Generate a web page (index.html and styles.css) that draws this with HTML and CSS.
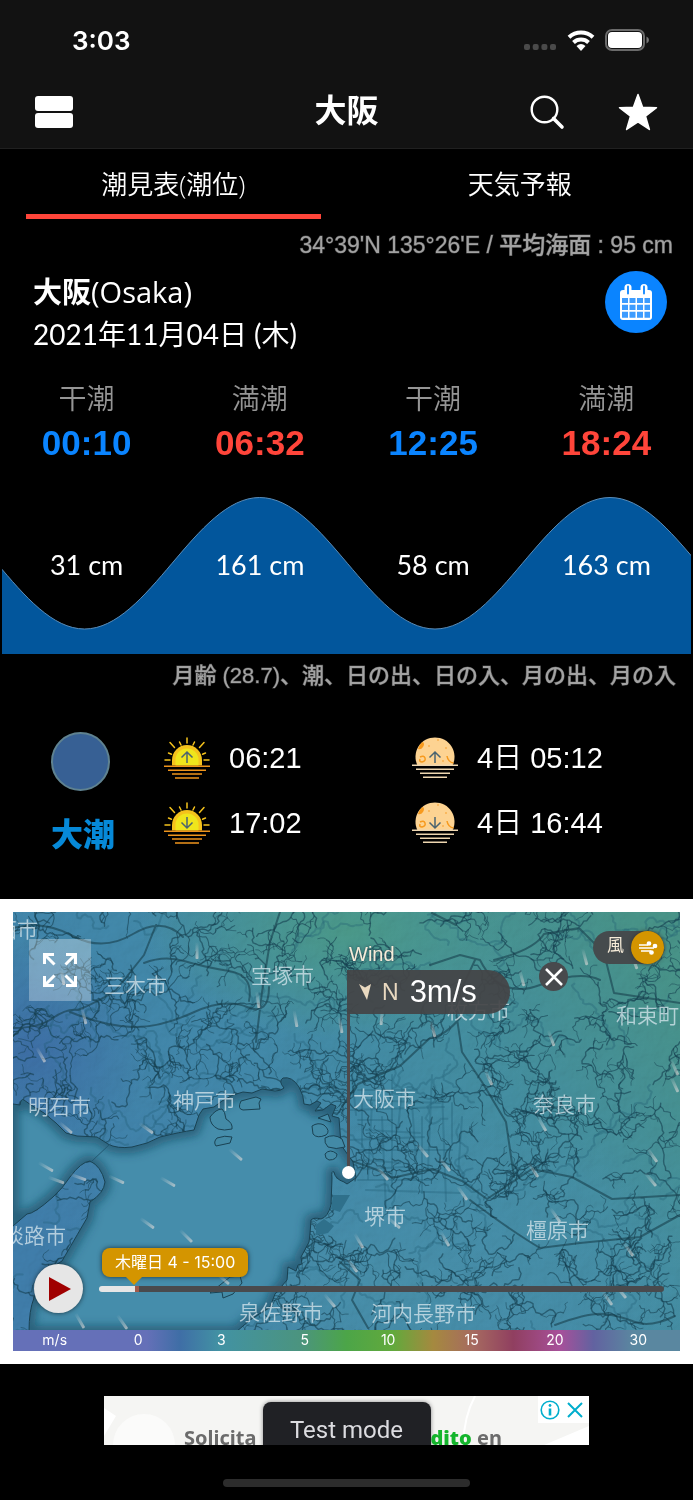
FILE: index.html
```
<!DOCTYPE html>
<html lang="ja">
<head>
<meta charset="utf-8">
<meta name="viewport" content="width=device-width, initial-scale=1">
<title>大阪 潮見表</title>
<link rel="stylesheet" href="styles.css">
</head>
<body>
<header class="top">
  <div class="status">
    <span class="clock">3:03</span>
    <div class="status-icons">
      <svg width="32" height="8" viewBox="0 0 32 8" fill="#4a4a4a"><rect x="0" y="1" width="6" height="6" rx="2"/><rect x="8.700" y="1" width="6" height="6" rx="2"/><rect x="17.400" y="1" width="6" height="6" rx="2"/><rect x="26" y="1" width="6" height="6" rx="2"/></svg>
      <svg class="wifi" width="28" height="22" viewBox="0 0 28 22" fill="none" stroke="#fff" stroke-width="4"><path d="M2 8.200A17.500 17.500 0 0 1 26 8.200"/><path d="M6.500 13.500A11 11 0 0 1 21.500 13.500"/><path d="M14 22l-4.500-5q4.500-4 9 0z" fill="#fff" stroke="none"/></svg>
      <svg width="44" height="22" viewBox="0 0 44 22"><rect x="1" y="1" width="38" height="20" rx="6" fill="none" stroke="#6b6b6b" stroke-width="2"/><rect x="3" y="3" width="34" height="16" rx="4" fill="#fff"/><path d="M41.500 7.500q2.500 1 2.500 3.500t-2.500 3.500z" fill="#777"/></svg>
    </div>
  </div>
  <div class="nav">
    <button class="icon-btn" aria-label="メニュー"><svg width="38" height="32" viewBox="0 0 38 32" fill="#fff"><rect y="0" width="38" height="15" rx="3"/><rect y="17" width="38" height="15" rx="3"/></svg></button>
    <h1 class="title">大阪</h1>
    <div class="nav-right">
      <button class="icon-btn" aria-label="検索"><svg width="36" height="36" viewBox="0 0 36 36" fill="none" stroke="#fff"><circle cx="15.500" cy="15.500" r="12.800" stroke-width="2.400"/><path d="M24.500 24.500l8.500 8.500" stroke-width="3.600" stroke-linecap="round"/></svg></button>
      <button class="icon-btn" aria-label="お気に入り"><svg width="40" height="38" viewBox="0 0 40 38" fill="#fff" stroke="#fff" stroke-width="1.500" stroke-linejoin="round"><path d="M20 1.500l4.600 12.800 13.900.400-11 8.500 3.900 13.300L20 28.800 8.600 36.500l3.900-13.300-11-8.500 13.900-.400z"/></svg></button>
    </div>
  </div>
</header>

<nav class="tabs">
  <button class="tab tab-active">潮見表(潮位)</button>
  <button class="tab">天気予報</button>
</nav>

<main>
  <section class="place">
    <p class="note">34°39'N 135°26'E / 平均海面 : 95 cm</p>
    <div class="place-row">
      <div>
        <h2 class="place-name"><b>大阪</b>(Osaka)</h2>
        <p class="place-date">2021年11月04日 (木)</p>
      </div>
      <button class="cal-btn" aria-label="カレンダー">
        <svg width="36" height="38" viewBox="0 0 36 38" fill="#fff"><rect x="2" y="7" width="32" height="30" rx="3"/><rect x="6.500" y="1" width="7" height="12" rx="3.500"/><rect x="22.500" y="1" width="7" height="12" rx="3.500"/><path d="M10 3.500v7M26 3.500v7" stroke="#0a84ff" stroke-width="1.800" stroke-linecap="round"/><g fill="#3d9cff"><path d="M4 15h6v5H4zM11.500 15h6v5h-6zM19 15h6v5h-6zM26.500 15h5.500v5h-5.500zM4 21.800h6v5.200H4zM11.500 21.800h6v5.200h-6zM19 21.800h6v5.200h-6zM26.500 21.800h5.500v5.200h-5.500zM4 28.800h6v6H4zM11.500 28.800h6v6h-6zM19 28.800h6v6h-6zM26.500 28.800h5.500v6h-5.500z"/></g></svg>
      </button>
    </div>
  </section>

  <section class="tides">
    <div class="tide"><span>干潮</span><strong class="low">00:10</strong></div>
    <div class="tide"><span>満潮</span><strong class="high">06:32</strong></div>
    <div class="tide"><span>干潮</span><strong class="low">12:25</strong></div>
    <div class="tide"><span>満潮</span><strong class="high">18:24</strong></div>
  </section>

  <section class="wave">
    <svg class="wave-shape" viewBox="2 496 689 158" preserveAspectRatio="none" aria-hidden="true">
      <path d="M-91 497.500C-27 497.500 20.700 629 84.500 629S195.900 497.500 259.700 497.500 371.200 629 435 629 546.200 497.500 610 497.500 721.500 629 785.300 629V660H-91z" fill="#02569c" stroke="#5a8cb8" stroke-width="1"/>
    </svg>
    <div class="levels"><span>31 cm</span><span>161 cm</span><span>58 cm</span><span>163 cm</span></div>
  </section>

  <section class="astro">
    <p class="note note-small">月齢 (28.7)、潮、日の出、日の入、月の出、月の入</p>
    <div class="astro-row">
      <div class="moon"><span class="moon-disc"></span><b>大潮</b></div>
      <div class="times">
        <div class="time"><svg class="orb"><use href="#sun"/><use href="#up"/></svg>06:21</div>
        <div class="time"><svg class="orb"><use href="#sun"/><use href="#down"/></svg>17:02</div>
      </div>
      <div class="times times-moon">
        <div class="time"><svg class="orb"><use href="#fullmoon"/><use href="#up"/></svg>4日 05:12</div>
        <div class="time"><svg class="orb"><use href="#fullmoon"/><use href="#down"/></svg>4日 16:44</div>
      </div>
    </div>
  </section>

  <section class="map-frame">
    <div class="map">
      <svg class="map-art" viewBox="13 912 667 418" preserveAspectRatio="xMidYMid slice">
        <defs>
          <linearGradient id="field" x1="0" y1=".7" x2="1" y2=".15"><stop offset="0" stop-color="#407eac"/><stop offset=".4" stop-color="#4289ab"/><stop offset=".68" stop-color="#448fa2"/><stop offset="1" stop-color="#489489"/></linearGradient>
          <radialGradient id="westblue"><stop offset="0" stop-color="#3d6fa6"/><stop offset="1" stop-color="#3d6fa6" stop-opacity="0"/></radialGradient>
          <radialGradient id="northgreen"><stop offset="0" stop-color="#4b9a8a"/><stop offset="1" stop-color="#4b9a8a" stop-opacity="0"/></radialGradient>
          <radialGradient id="southteal"><stop offset="0" stop-color="#4890aa"/><stop offset="1" stop-color="#4890aa" stop-opacity="0"/></radialGradient>
          <linearGradient id="streak"><stop offset="0" stop-color="#ddd" stop-opacity="0"/><stop offset="1" stop-color="#ded9d6"/></linearGradient>
          <filter id="relief" x="0" y="0" width="1" height="1"><feTurbulence type="fractalNoise" baseFrequency=".07" numOctaves="4" seed="8"/><feDiffuseLighting surfaceScale="2" lighting-color="#fff"><feDistantLight azimuth="225" elevation="55"/></feDiffuseLighting></filter>
          <filter id="soft"><feGaussianBlur stdDeviation="5"/></filter>
          <path id="bay" d="M13 1104L20 1105Q21 1098 24 1100L31 1105 44 1113 56 1123 66 1133 77 1136 97 1137 108 1144Q117 1149 132 1147 148 1144 160 1137 180 1132 194 1130L199 1115 203 1109 214 1107 222 1101 233 1095 243 1092 252 1093 262 1089 275 1091Q281 1091 284 1088 278 1081 283 1078 292 1076 299 1087 304 1096 304 1104L310 1105 317 1101 321 1103 315 1111 323 1110 331 1104 336 1106 332 1116 339 1118 341 1145 353 1162 356 1178 347 1184 344 1182Q335 1179 334 1172 331 1170 332 1178L331 1205Q328 1217 321 1219 314 1217 311 1220 310 1235 309 1242L301 1257 302 1264 298 1265 296 1271 288 1267 287 1280 275 1294 270 1307 250 1320 236 1332H29Q29 1310 34 1298 43 1270 62 1261 80 1230 87 1218L90 1202Q104 1193 105 1182 101 1166 90 1161 81 1162 70 1177 63 1188 53 1197 34 1214 27 1214L13 1226z"/>
          <clipPath id="bay-clip"><use href="#bay"/></clipPath>
        </defs>
        <rect x="13" y="912" width="667" height="418" fill="url(#field)"/>
        <ellipse cx="30" cy="1050" rx="120" ry="110" fill="url(#westblue)"/>
        <ellipse cx="350" cy="930" rx="210" ry="110" fill="url(#northgreen)"/>
        <ellipse cx="400" cy="1290" rx="360" ry="180" fill="url(#southteal)"/>
        <rect class="relief" x="13" y="912" width="667" height="418" filter="url(#relief)"/>
        <g id="roads" class="roads"></g>
        <g id="rivers" class="rivers"></g>
        <path class="rivers-main" d="M13 928q30-8 60 8t60-2 50 3M13 1028q26 0 40-10t25-8q20-8 38-20l28-35 12-30M70 1012q35 14 62 15t60-14 55-6 22-20M144 963q20-8 40-2t45 10 20 30M280 912l-10 30-8 50-6 50M432 913l24 12M600 980q-20-10-60 5t-60-25l-20-5-30 10M460 1018q-15 18-30 20l-30 28-42 18-16 22M475 960l-14 30-5 22 6 40 20 30 24 40 8 55M494 960q40-10 50-26l35-6 25 25 10 40 66 10M347 1160q30 8 45 18l40-9 30 12 25 18 45-30 40 8 40 22 70-4M470 1200q40 30 70 48l40-5 60-6 40-22M555 1325q35-13 50-11t30 8 40-6M340 1262l20 18-8 20 16 28"/>
        <use href="#bay" fill="#458dab"/>
        <g clip-path="url(#bay-clip)"><use href="#bay" class="bay-shade"/></g>
        <use href="#bay" class="coast"/>
        <g class="islets"><path d="M210 1117q6-8 12-8 3 2 4 10 7 4 6 10-8 2-14 0-8-4-8-12zM241 1101q-4 8 2 9l17-1-1-6 2-4-5-2-4 1zM217 1138q8-3 15-1l-2 6-14 3q-3-4 1-8zM312 1126q6-4 12-1 7 6 2 10-9 4-13-1zM318 1118l10-4 3 8zM325 1138q9-5 17 1l3 8q-9 3-17 0-4-4-3-9zM325 1154q5-6 12 0 0 6-8 6-4-1-4-6zM210 1293l20-16 10-1 2 7-9 11-10 4-1-6z"/></g>
        <path class="port" d="M333 1195h17l-10 17-9-3zM316 1225l8-6 10 7-6 7-12 2z"/>
        <path class="bridge" d="M92 1161l18-17"/>
        <g id="streaks"></g>
        <g class="cities">
          <text x="-4" y="937">西市</text><text x="104" y="993">三木市</text><text x="251" y="983">宝塚市</text><text x="28" y="1114">明石市</text><text x="173" y="1108">神戸市</text><text x="353" y="1106">大阪市</text><text x="447" y="1018">枚方市</text><text x="616" y="1023">和束町</text><text x="533" y="1112">奈良市</text><text x="364" y="1224">堺市</text><text x="526" y="1238">橿原市</text><text x="3" y="1243">淡路市</text><text x="239" y="1320">泉佐野市</text><text x="371" y="1321">河内長野市</text>
        </g>
      </svg>

      <button class="expand" aria-label="全画面"><svg width="36" height="36" viewBox="0 0 36 36" fill="none" stroke="#fff" stroke-width="3"><path d="M2.500 12V2.500H12M2.500 2.500l10 10M24 2.500h9.500V12M33.500 2.500l-10 10M2.500 24v9.500H12M2.500 33.500l10-10M24 33.500h9.500V24M33.500 33.500l-10-10"/></svg></button>

      <div class="picker">
        <span class="picker-title">Wind</span>
        <div class="picker-value"><svg width="12" height="16" viewBox="0 0 12 16"><path d="M0 0l6 3.500L12 0 8 16z" fill="#e9d9c0"/></svg><span class="dir">N</span><span>3m/s</span></div>
        <span class="stem"></span>
      </div>
      <button class="close" aria-label="閉じる"><svg width="18" height="18" viewBox="0 0 18 18" stroke="#fff" stroke-width="2.500"><path d="M1 1l16 16M17 1L1 17"/></svg></button>

      <button class="layer"><span>風</span><i class="layer-icon"><svg width="20" height="16" viewBox="0 0 20 16" fill="none" stroke="#fff" stroke-width="1.500"><path d="M1 5h9M1 8h15M3 11h10"/><circle cx="11" cy="3.500" r="1.600" fill="#fff"/><circle cx="17" cy="6" r="1.600" fill="#fff"/><circle cx="13.500" cy="12.500" r="1.600" fill="#fff"/></svg></i></button>

      <div class="timeline">
        <button class="play" aria-label="再生"><svg width="24" height="26" viewBox="0 0 24 26"><path d="M1 1l22 12L1 25z" fill="#a00000"/></svg></button>
        <div class="track-box">
          <output class="stamp" for="hour">木曜日 4 - 15:00</output>
          <input class="track" id="hour" type="range" min="0" max="100" value="6" aria-label="時刻">
        </div>
      </div>
    </div>
    <div class="legend"><span>m/s</span><span>0</span><span>3</span><span>5</span><span>10</span><span>15</span><span>20</span><span>30</span></div>
  </section>
</main>

<footer class="foot">
  <div class="ad">
    <svg class="ad-art" viewBox="0 0 485 49" preserveAspectRatio="none" aria-hidden="true"><circle cx="40" cy="49" r="31" fill="#fbfbfa"/><path d="M0 12l12 8L0 40z" fill="#fff"/><path d="M371 0q-11 20-12 49" fill="none" stroke="#fff" stroke-width="2"/><path d="M485 30l-45 19h45z" fill="#fff"/></svg>
    <span class="ad-left">Solicita</span>
    <span class="ad-badge">Test mode</span>
    <span class="ad-right"><b>dito</b> en</span>
    <div class="ad-choice">
      <button class="ad-btn" aria-label="広告情報"><svg width="20" height="20" viewBox="0 0 20 20" fill="none" stroke="#00aecd"><circle cx="10" cy="10" r="8.800" stroke-width="1.600"/><path d="M10 8.500v7" stroke-width="2.600"/><circle cx="10" cy="5.400" r="1" fill="#00aecd"/></svg></button>
      <button class="ad-btn" aria-label="広告を閉じる"><svg width="16" height="16" viewBox="0 0 16 16" stroke="#00aecd" stroke-width="2"><path d="M1 1l14 14M15 1L1 15"/></svg></button>
    </div>
  </div>
  <div class="home-bar"></div>
</footer>

<svg class="symbols" aria-hidden="true">
  <symbol id="sun" viewBox="0 0 46 42"><g stroke="#f4c21c" stroke-width="1.500" stroke-linecap="round"><path d="M23 1v5M6 5.500l4.500 5M40 5.500l-4.500 5M15.500 5l1.500 3M30.500 5L29 8M4.500 16l3 1.200M41.500 16l-3 1.200M1 23h5M40 23h5"/></g><path d="M8 28.500V23a15 15 0 0 1 30 0v5.500z" fill="#f4c21c"/><path d="M11.500 28.500V23a11.500 11.500 0 0 1 23 0v5.500z" fill="#efe51c"/><path d="M0 29.200h46M4 33.200h38M8 37h30M11 41h24" stroke="#ee941c" stroke-width="1.600"/></symbol>
  <symbol id="fullmoon" viewBox="0 0 46 42"><path d="M5.500 28.500A19.500 19.500 0 1 1 40.500 28.500z" fill="#fdd392"/><path d="M6 12q2-6 5-7 2 2 0 5t-5 2z" fill="#f79a1e"/><path d="M8 20q4-2 5 1t-3 4q-3 0-2-3M35 19q1 6 6.500 7" fill="none" stroke="#f79a1e" stroke-width="1.500"/><g fill="#f9b04e"><circle cx="17" cy="9" r="1"/><circle cx="26" cy="3" r="1"/><circle cx="34" cy="11" r="1"/><circle cx="31" cy="24" r="1"/></g><path d="M0 28.200h46M4 32.200h38M8 36.200h30M11 40.200h24" stroke="#eed6b0" stroke-width="1.500"/></symbol>
  <symbol id="up" viewBox="0 0 46 42"><path d="M23 26V15.500M17.500 20.500L23 15l5.500 5.500" fill="none" stroke="#4a6470" stroke-width="1.500"/></symbol>
  <symbol id="down" viewBox="0 0 46 42"><path d="M23 15v10.500M17.500 20.500L23 26l5.500-5.500" fill="none" stroke="#4a6470" stroke-width="1.500"/></symbol>
</svg>
<script src="map.js"></script>
</body>
</html>
```

FILE: styles.css
```
* { box-sizing: border-box; }
body { margin: 0; background: #000; color: #fff; font-family: "Liberation Sans", "Noto Sans CJK JP", sans-serif; }
h1, h2, p { margin: 0; font-weight: 400; }
button { margin: 0; padding: 0; border: 0; background: none; color: inherit; font: inherit; }
svg { display: block; }

.top { height: 149px; background: #121212; border-bottom: 1px solid #202020; }
.status { display: flex; justify-content: space-between; align-items: center; height: 76px; padding: 4px 44px 0 72px; }
.clock { font: 600 26px Inter, sans-serif; }
.status-icons { display: flex; align-items: flex-end; gap: 11px; }
.status-icons .wifi { margin-right: -1px; }
.nav { display: grid; grid-template-columns: 1fr auto 1fr; align-items: center; height: 72px; padding: 0 35px; }
.title { padding-bottom: 8px; font: 700 32px/48px "Noto Sans CJK JP", sans-serif; }
.nav-right { display: flex; justify-content: flex-end; gap: 53px; }

.tabs { display: grid; grid-template-columns: 1fr 1fr; height: 70px; }
.tab { margin: 0 26px; padding-top: 4px; border-bottom: 5px solid transparent; font: 350 26px/36px "Open Sans", "Noto Sans CJK JP", sans-serif; }
.tab-active { border-color: #ff453a; }

.place { padding: 9px 20px 0 33px; }
.note { color: #a3a3a3; text-align: right; font: 500 23px/34px "Liberation Sans", "Noto Sans CJK JP", sans-serif; -webkit-text-stroke: 1px rgba(163, 163, 163, .4); }
.note-small { font-size: 22px; }
.place-row { display: flex; justify-content: space-between; align-items: flex-start; padding: 8px 6px 0 0; }
.place-name, .place-date { font: 400 28px/43px Lato, "Noto Sans CJK JP", sans-serif; }
.place-name { font-family: "Open Sans", "Noto Sans CJK JP", sans-serif; font-size: 29px; }
.cal-btn { display: grid; place-items: center; width: 62px; height: 62px; margin-top: 1px; border-radius: 50%; background: #0a84ff; }

.tides { display: grid; grid-template-columns: repeat(4, 1fr); padding-top: 21px; text-align: center; }
.tide { display: flex; flex-direction: column; }
.tide span { color: #959595; font: 350 28px/40px "Noto Sans CJK JP", sans-serif; }
.tide strong { font-size: 35px; line-height: 52px; }
.low { color: #0a84ff; }
.high { color: #ff453a; }

.wave { display: grid; align-items: center; margin-top: 27px; }
.wave > * { grid-area: 1 / 1; }
.wave-shape { width: calc(100% - 4px); height: 158px; margin: 0 2px; }
.levels { display: grid; grid-template-columns: repeat(4, 1fr); padding-bottom: 20px; text-align: center; font: 400 27px/34px Lato, sans-serif; }

.astro { height: 245px; padding: 5px 17px 0 51px; }
.astro-row { display: flex; padding-top: 36px; }
.moon { display: flex; flex-direction: column; gap: 19px; width: 113px; padding-top: 3px; color: #0689d8; font: 700 32px/44px "Noto Sans CJK JP", sans-serif; }
.moon-disc { width: 59px; height: 59px; border: 2px solid #5f8290; border-radius: 50%; background: #376094; }
.times { display: flex; flex-direction: column; gap: 21px; width: 248px; padding-top: 7px; }
.times-moon { width: auto; }
.time { display: flex; align-items: center; gap: 19px; height: 44px; font: 350 29px/44px "Liberation Sans", "Noto Sans CJK JP", sans-serif; }
.orb { width: 46px; height: 42px; }

.map-frame { padding: 13px; background: #fff; }
.map { position: relative; height: 418px; overflow: hidden; background: #448ca8; }
.map-art { width: 100%; height: 100%; }
.relief { opacity: .2; mix-blend-mode: multiply; }
.roads, .rivers, .rivers-main, .coast, .bay-shade, .bridge { fill: none; stroke-linejoin: round; stroke-linecap: round; }
.roads { stroke: #1d5a72; stroke-opacity: .3; stroke-width: 2; }
.rivers { stroke: #163f50; stroke-opacity: .6; }
.rivers-main { stroke: #183f4d; stroke-opacity: .6; stroke-width: 2; }
.bay-shade { stroke: #133f58; stroke-opacity: .6; stroke-width: 12; filter: url(#soft); }
.coast { stroke: #1a4253; stroke-width: 1px; }
.islets { fill: #438aa6; stroke: #1a4253; stroke-width: 1; }
.port { fill: #2f708b; }
.bridge { stroke: #235872; stroke-width: 1; }
.cities { fill: #d9e8ef; fill-opacity: .75; font: 350 21px "Noto Sans CJK JP", sans-serif; }

.expand { position: absolute; top: 27px; left: 16px; display: grid; place-items: center; width: 62px; height: 62px; background: rgba(255, 255, 255, .3); }
.picker { position: absolute; top: 31px; left: 334px; display: flex; flex-direction: column; align-items: flex-start; color: #fff; }
.picker-title { padding-left: 2px; color: #f6ecd9; font-size: 20px; line-height: 22px; text-shadow: 0 0 3px #234; }
.picker-value { display: flex; align-items: center; gap: 11px; width: 163px; height: 44px; margin-top: 5px; padding-left: 12px; border-radius: 0 22px 22px 0; background: rgba(68, 68, 70, .93); font-size: 31px; }
.dir { color: #e9d9c0; font-size: 23px; }
.stem { position: relative; width: 3px; height: 158px; background: #4d4a4d; }
.stem::after { content: ""; position: absolute; left: -5px; bottom: -7px; width: 13px; height: 13px; border-radius: 50%; background: #fff; }
.close { position: absolute; top: 50px; right: 112px; display: grid; place-items: center; width: 29px; height: 29px; border-radius: 50%; background: #484a4d; }
.layer { position: absolute; top: 19px; right: 16px; display: flex; align-items: center; justify-content: space-between; width: 71px; height: 33px; padding-left: 14px; border-radius: 17px; background: #454b4d; color: #f6ecd9; font: 400 17px/24px "Noto Sans CJK JP", sans-serif; }
.layer span { padding-bottom: 8px; }
.layer-icon { display: grid; place-items: center; width: 33px; height: 33px; border-radius: 50%; background: #d49500; box-shadow: 0 0 4px #333; }
.timeline { position: absolute; left: 21px; right: 16px; bottom: 17px; display: flex; align-items: flex-end; gap: 16px; }
.play { display: grid; place-items: center; flex: none; width: 49px; height: 49px; padding-left: 3px; border-radius: 50%; background: #e6e6e6; box-shadow: 0 0 5px #1a3340; }
.track-box { display: flex; flex: 1; flex-direction: column; align-items: flex-start; gap: 9px; padding-bottom: 21px; }
.stamp { position: relative; margin-left: 3px; padding: 0 13px; border-radius: 8px; background: #d49500; box-shadow: 0 0 5px #1a3340; font: 400 16px/29px Inter, "Noto Sans CJK JP", sans-serif; }
.stamp::after { content: ""; position: absolute; top: 29px; left: 24px; border: 8px solid transparent; border-top-color: #d49500; border-bottom: 0; }
.track { appearance: none; width: 100%; height: 6px; margin: 0; border-radius: 3px; background: linear-gradient(90deg, #e6e6e6 36px, #a05a4b 36px 40px, #494a4d 40px); }
.track::-webkit-slider-thumb { appearance: none; width: 4px; height: 6px; }
.legend { display: grid; grid-template-columns: repeat(8, 1fr); padding-bottom: 2px; text-align: center; font: 400 14px/19px Inter, sans-serif; background: linear-gradient(90deg, #6570b8 20%, #3f6ea6 25%, #4292a3 31%, #4b947f 43%, #4ca548 50%, #62a93c 57%, #a5893f 63%, #a66a60 69%, #903f60 75%, #a7509a 82%, #6262a0 87%, #5a87a0 93%); }

.foot { display: flex; flex-direction: column; align-items: center; gap: 34px; padding: 32px 0 13px; }
.ad { position: relative; display: grid; grid-template-columns: 1fr 168px 1fr; align-items: start; width: 70%; height: 49px; overflow: hidden; background: #f5f5f3; color: #6b6b6b; }
.ad-art { position: absolute; width: 100%; height: 100%; }
.ad-left, .ad-right { position: relative; padding-top: 29px; font: 700 20px/26px "Noto Sans", sans-serif; }
.ad-left { padding-right: 6px; text-align: right; }
.ad-right b { color: #14b52c; }
.ad-badge { position: relative; height: 60px; margin-top: 6px; border-radius: 8px; background: #202125; box-shadow: 0 0 4px #888; color: #dcdce0; text-align: center; font: 400 24px/56px Roboto, sans-serif; }
.ad-choice { position: absolute; top: 0; right: 0; display: flex; align-items: center; gap: 7px; height: 27px; padding: 0 6px 0 2px; background: #fff; }
.home-bar { width: 247px; height: 8px; border-radius: 4px; background: #2c2c2c; }
.symbols { position: absolute; width: 0; height: 0; }
```

FILE: map.js
```
// Draws the river, road and wind-streak layers of the map.
(function () {
  var NS = 'http://www.w3.org/2000/svg';
  var seed = 41;
  function rnd() {
    seed = (seed * 16807) % 2147483647;
    return seed / 2147483647;
  }
  function add(parent, d, width) {
    var p = document.createElementNS(NS, 'path');
    p.setAttribute('d', d);
    if (width) p.setAttribute('stroke-width', width);
    parent.appendChild(p);
  }
  // A meandering line that splits into thinner side branches.
  function branch(parent, x, y, angle, steps, width, depth) {
    var d = 'M' + x.toFixed(1) + ' ' + y.toFixed(1);
    var heading = angle;
    var drift = angle;
    for (var i = 0; i < steps; i++) {
      drift += (rnd() - 0.5) * 0.7;
      heading += (rnd() - 0.5) * 2.2 + (drift - heading) * 0.4;
      x += Math.cos(heading) * 3.2;
      y += Math.sin(heading) * 3.2;
      d += 'L' + x.toFixed(1) + ' ' + y.toFixed(1);
      if (depth > 0 && rnd() < 0.2) {
        branch(parent, x, y, heading + (rnd() < 0.5 ? -1 : 1) * (0.6 + rnd() * 0.7), 3 + Math.floor(rnd() * steps * 0.4), Math.max(0.8, width * 0.75), depth - 1);
      }
    }
    add(parent, d, width);
  }
  var rivers = document.getElementById('rivers');
  var roads = document.getElementById('roads');
  for (var gy = 910; gy < 1335; gy += 40) {
    for (var gx = 10; gx < 685; gx += 38) {
      branch(rivers, gx + rnd() * 34, gy + rnd() * 34, rnd() * 6.28, 16 + Math.floor(rnd() * 14), 1.4, 2);
    }
  }
  for (var r = 0; r < 80; r++) {
    branch(roads, 20 + rnd() * 660, 915 + rnd() * 410, rnd() * 6.28, 30, 2, 0);
  }
  for (var s = 0; s < 12; s++) {
    add(roads, 'M' + (352 + s * 10) + ' ' + (1075 + s % 4 * 14) + 'l' + (4 - s % 3 * 4) + ' ' + (40 + s % 5 * 18));
    add(roads, 'M' + (350 + s % 3 * 8) + ' ' + (1080 + s * 10) + 'l' + (34 + s % 4 * 20) + ' ' + (s % 3 * 3 - 3));
  }

  var layer = document.getElementById('streaks');
  var heads = [
    [197, 959, 90], [64, 985, 80], [86, 1024, 75], [45, 1062, 60], [259, 1008, 82], [297, 1027, 80],
    [342, 1033, 80], [72, 1133, 40], [153, 1133, 35], [587, 965, 75], [524, 986, 75], [637, 969, 70],
    [381, 1025, 95], [435, 1037, 75], [554, 1046, 70], [492, 1085, 65], [546, 1131, 60], [678, 1075, 65],
    [678, 1092, 65], [53, 1171, 30], [64, 1183, 20], [86, 1180, 20], [124, 1183, 25], [175, 1186, 30],
    [242, 1160, 40], [154, 1228, 35], [192, 1242, 45], [84, 1328, 60], [127, 1329, 55], [229, 1284, 40],
    [388, 1180, 50], [428, 1157, 50], [450, 1171, 50], [538, 1177, 55], [657, 1162, 55], [656, 1186, 50],
    [467, 1200, 55], [560, 1222, 55], [633, 1256, 55], [449, 1246, 60], [363, 1248, 60], [357, 1272, 55],
    [612, 1305, 55], [626, 1298, 50], [335, 1307, 50], [400, 1228, 40]
  ];
  heads.forEach(function (h) {
    var g = document.createElementNS(NS, 'rect');
    g.setAttribute('x', h[0] - 17);
    g.setAttribute('y', h[1] - 1.5);
    g.setAttribute('width', 17);
    g.setAttribute('height', 3);
    g.setAttribute('rx', 1);
    g.setAttribute('fill', 'url(#streak)');
    g.setAttribute('opacity', '.65');
    g.setAttribute('transform', 'rotate(' + h[2] + ' ' + h[0] + ' ' + h[1] + ')');
    layer.appendChild(g);
  });
})();
```
